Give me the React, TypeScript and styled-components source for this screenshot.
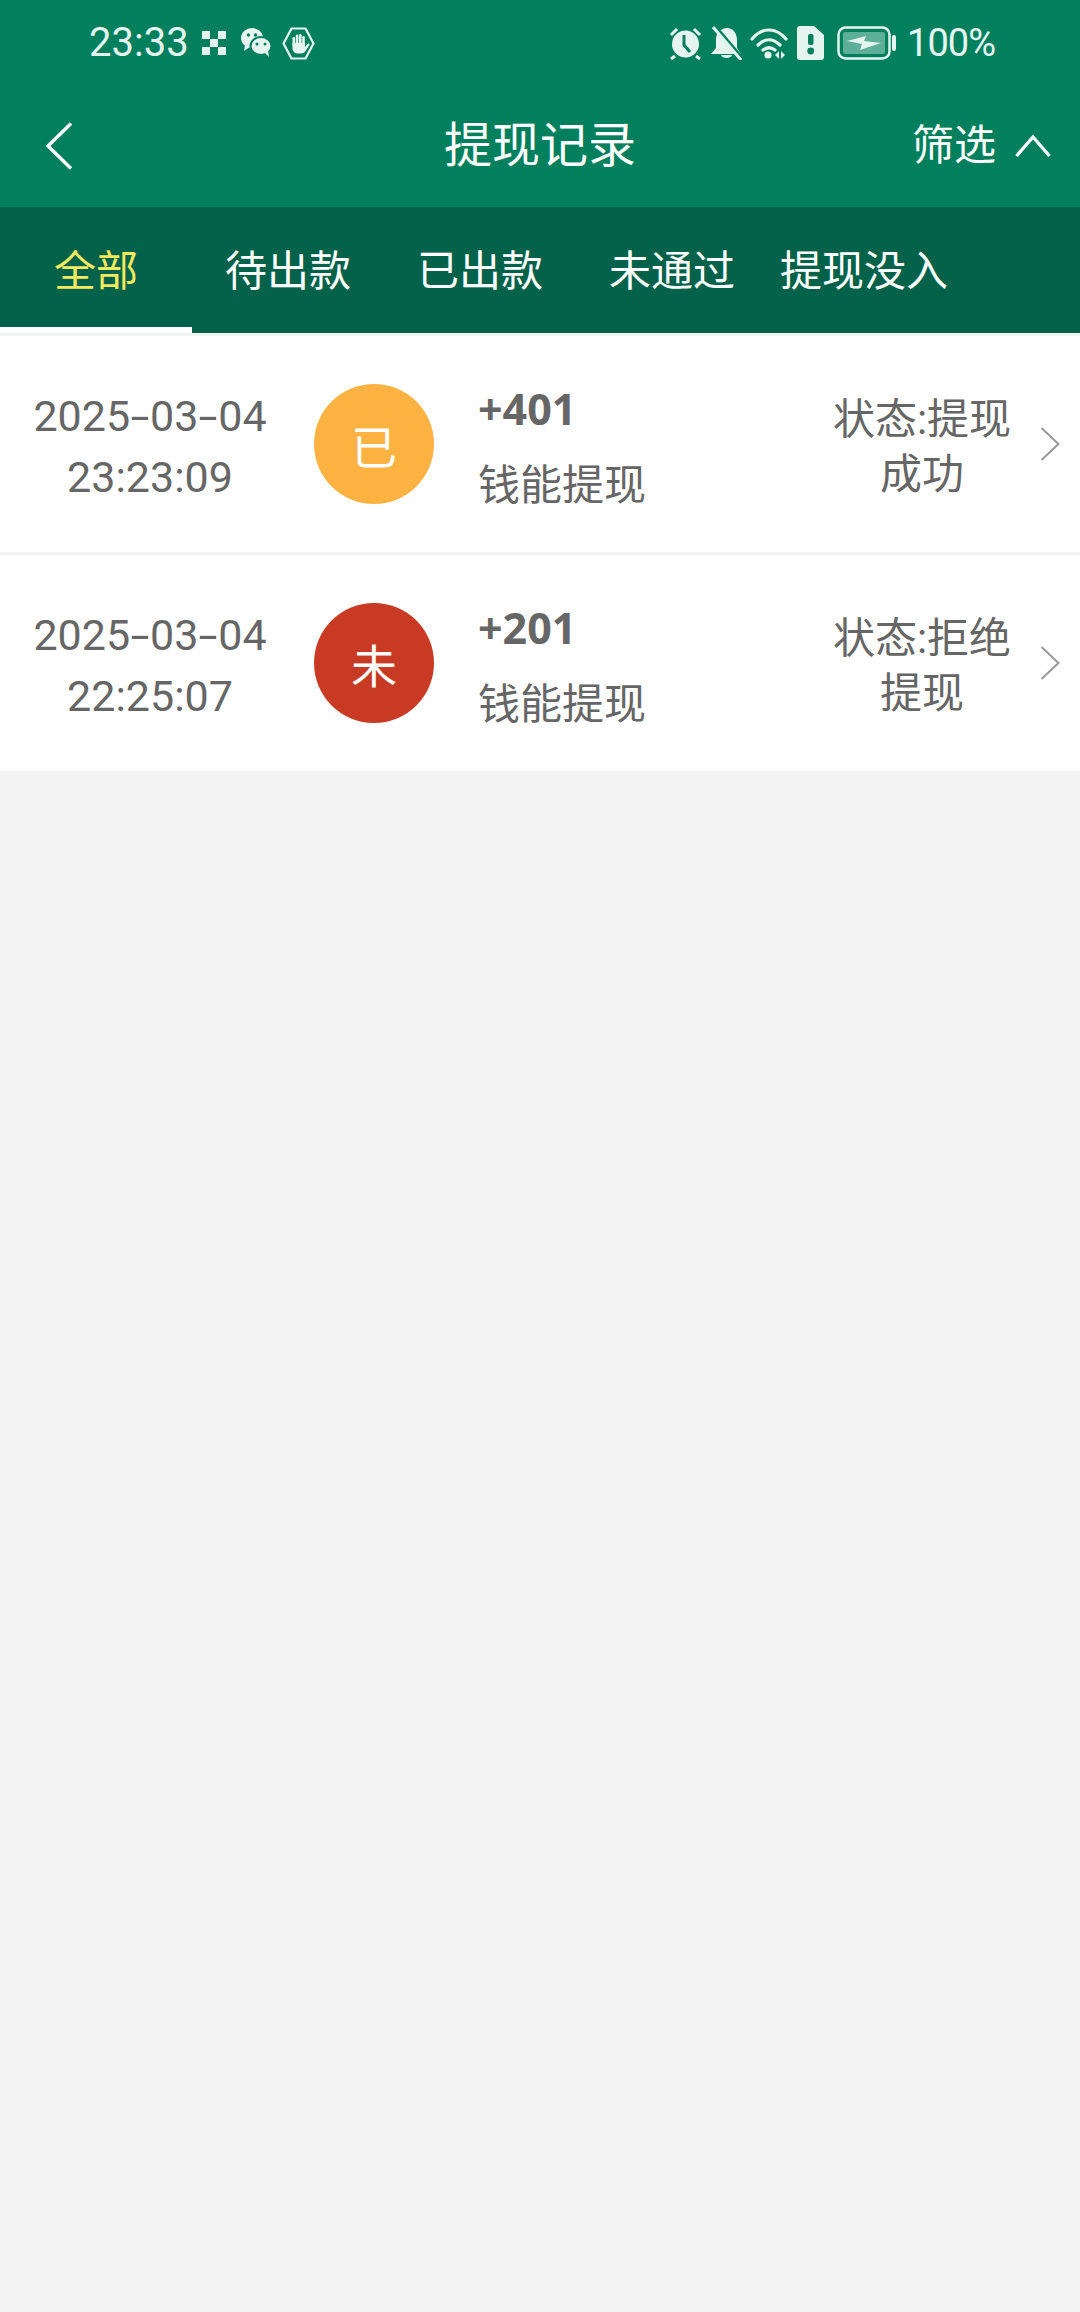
import React from 'react';
import styled, { createGlobalStyle } from 'styled-components';

const GlobalStyle = createGlobalStyle`
  html, body {
    margin: 0;
    padding: 0;
    background: #f3f3f3;
  }
  * {
    box-sizing: border-box;
  }
`;

const FONT = `Roboto, "Noto Sans CJK SC", sans-serif`;

const Page = styled.div`
  width: 1080px;
  height: 2312px;
  background: #f3f3f3;
  font-family: ${FONT};
  overflow: hidden;
`;

const Header = styled.header`
  background: #02805e;
  color: #fff;
`;

const StatusBar = styled.div`
  height: 84px;
  padding: 2px 85px 0 89px;
  display: flex;
  align-items: center;
  justify-content: space-between;
  color: #e6f4f0;
`;

const StatusGroup = styled.div<{ $gap: number }>`
  display: flex;
  align-items: center;
  gap: ${({ $gap }) => $gap}px;
`;

const Clock = styled.span`
  font-size: 40px;
  line-height: 80px;
  margin-right: 3px;
`;

const BatteryLevel = styled.span`
  font-size: 38px;
  letter-spacing: -1px;
  line-height: 80px;
  margin-left: 3px;
`;

const NavBar = styled.div`
  height: 123px;
  padding: 0 29px 0 45px;
  display: flex;
  align-items: center;
  justify-content: space-between;
  position: relative;
`;

const Title = styled.h1`
  position: absolute;
  left: 0;
  right: 0;
  top: 28px;
  margin: 0;
  text-align: center;
  font-size: 48px;
  line-height: 68px;
  font-weight: 400;
`;

const FilterButton = styled.div`
  display: flex;
  align-items: center;
  gap: 19px;
  font-size: 42px;
  line-height: 56px;
`;

const Tabs = styled.nav`
  height: 126px;
  background: #04624a;
  display: flex;
`;

const Tab = styled.div<{ $active?: boolean }>`
  width: 192px;
  flex: none;
  position: relative;
  display: flex;
  align-items: center;
  justify-content: center;
  padding-bottom: 6px;
  font-size: 42px;
  color: ${({ $active }) => ($active ? '#f3e95f' : '#ffffff')};

  ${({ $active }) =>
    $active &&
    `&::after {
      content: '';
      position: absolute;
      left: 0;
      bottom: 0;
      width: 100%;
      height: 6px;
      background: #fff;
    }`}
`;

const List = styled.ul`
  list-style: none;
  margin: 3px 0 0;
  padding: 0;
  display: flex;
  flex-direction: column;
  gap: 3px;
`;

const Row = styled.li`
  height: 216px;
  background: #fff;
  display: flex;
  align-items: center;
  color: #666;
`;

const DateColumn = styled.div`
  width: 300px;
  flex: none;
  text-align: center;
  font-size: 43px;
  line-height: 61px;
  margin-top: 6px;
`;

// the date's hyphens are drawn wider than the Roboto glyph
const Dash = styled.span`
  display: inline-block;
  margin: 0 4px;
  transform: scaleX(1.6);
`;

const Avatar = styled.div<{ $color: string }>`
  width: 120px;
  height: 120px;
  margin: 0 14px;
  flex: none;
  border-radius: 50%;
  background: ${({ $color }) => $color};
  color: #fff;
  display: flex;
  align-items: center;
  justify-content: center;
  font-size: 46px;
`;

const Info = styled.div`
  width: 354px;
  flex: none;
  margin: 4px 0 0 30px;
`;

const Amount = styled.div`
  font-family: "Noto Sans", ${FONT};
  font-weight: 700;
  font-size: 43px;
  line-height: 62px;
`;

const Label = styled.div`
  font-size: 42px;
  line-height: 56px;
  margin-top: 18px;
`;

const Status = styled.div`
  width: 180px;
  flex: none;
  text-align: center;
  font-size: 42px;
  line-height: 55px;
  margin-top: 6px;
`;

const RowChevron = styled.svg`
  width: 20px;
  height: 34px;
  margin-left: 28px;
  flex: none;
`;

const AlarmIcon = () => (
  <svg width="33" height="34" viewBox="0 0 33 34">
    <circle cx="16.500" cy="18" r="13.500" fill="currentColor" />
    <path d="M15 9v10l6 7" fill="none" stroke="#02805e" strokeWidth="3" />
    <path d="M2 9l6-6M31 9l-6-6M6 30l-4 3M27 30l4 3" stroke="currentColor" strokeWidth="3" fill="none" />
  </svg>
);

const BellOffIcon = () => (
  <svg width="32" height="34" viewBox="0 0 32 34">
    <path d="M6 13c0-6 5-11 11-11s10 5 10 12v8l4 6H1l5-6z" fill="currentColor" />
    <path d="M11 29h11c-1 4-10 4-11 0z" fill="currentColor" />
    <path d="M3 -1l28 33" stroke="#02805e" strokeWidth="5" />
    <path d="M3 1l28 33" stroke="currentColor" strokeWidth="3" />
  </svg>
);

const WifiIcon = () => (
  <svg width="39" height="34" viewBox="0 0 39 34">
    <path d="M2 13C12 1 26 1 36 13M8 19c7-7 15-7 22 0M13 24c4-3 8-3 12 0" fill="none" stroke="currentColor" strokeWidth="3.200" strokeLinecap="round" />
    <circle cx="18" cy="29" r="3.600" fill="currentColor" />
    <path d="M29 25v8l-4-4zM31 25v8l4-4z" fill="currentColor" />
  </svg>
);

const SimAlertIcon = () => (
  <svg width="27" height="34" viewBox="0 0 27 34">
    <path d="M3 0h14l10 9v22a3 3 0 0 1-3 3H3a3 3 0 0 1-3-3V3a3 3 0 0 1 3-3z" fill="currentColor" />
    <rect x="11" y="8" width="5.500" height="11" rx="2" fill="#02805e" />
    <circle cx="13.700" cy="25" r="3.400" fill="#02805e" />
  </svg>
);

const BatteryIcon = () => (
  <svg width="64" height="34" viewBox="-5 0 64 34">
    <rect x="1.500" y="1.500" width="51" height="31" rx="7" fill="none" stroke="currentColor" strokeWidth="2.500" />
    <rect x="6" y="6" width="42" height="22" rx="2" fill="currentColor" opacity="0.4" />
    <rect x="55" y="9" width="4" height="16" rx="2" fill="currentColor" />
    <path d="M10 15l19-5-2 5 17 2-21 7 2-6z" fill="currentColor" />
  </svg>
);

const MosaicIcon = () => (
  <svg width="24" height="24" viewBox="0 0 24 24" fill="currentColor">
    <path d="M0 0h8v8H0zM16 0h8v8h-8zM8 8h8v8H8zM0 16h8v8H0zM16 16h8v8h-8z" />
  </svg>
);

const WechatIcon = () => (
  <svg width="36" height="30" viewBox="-5 0 36 30" fill="currentColor">
    <ellipse cx="11" cy="10" rx="11" ry="10" />
    <path d="M4 17l-1 6 6-4z" />
    <ellipse cx="20" cy="18" rx="10.500" ry="9" stroke="#02805e" strokeWidth="2" />
    <path d="M24 25l4 4-1-6z" />
    <circle cx="7.500" cy="7" r="1.700" fill="#02805e" />
    <circle cx="14.500" cy="7" r="1.700" fill="#02805e" />
    <circle cx="16" cy="16" r="1.500" fill="#02805e" />
    <circle cx="24" cy="16" r="1.500" fill="#02805e" />
  </svg>
);

const HandIcon = () => (
  <svg width="33" height="33" viewBox="0 0 33 33">
    <path d="M9.500 1.500h14L31.500 16.500 23.500 31.500h-14L1.500 16.500z" fill="none" stroke="currentColor" strokeWidth="2.200" strokeLinejoin="round" />
    <g fill="currentColor">
      <rect x="10.500" y="10" width="2.600" height="10" rx="1.300" />
      <rect x="13.800" y="7.500" width="2.600" height="11" rx="1.300" />
      <rect x="17" y="7" width="2.600" height="11" rx="1.300" />
      <rect x="20.200" y="9" width="2.600" height="10" rx="1.300" />
      <path d="M10.500 16h12.300v4l2.700-3c1-1 2.500 0 1.800 1.300l-4 6c-1 1.500-2.500 2.200-4.300 2.200h-3c-3 0-5-1.500-5.500-4.500z" />
    </g>
  </svg>
);

// wraps each hyphen of a date so it can be stretched
const renderDate = (date: string) =>
  date.split('-').map((part, i) => (
    <React.Fragment key={part + i}>
      {i > 0 && <Dash>-</Dash>}
      {part}
    </React.Fragment>
  ));

const App: React.FC = () => {
  const tabs = ['全部', '待出款', '已出款', '未通过', '提现没入'];
  const records = [
    { date: '2025-03-04', time: '23:23:09', badge: '已', color: '#fdb242', amount: '+401', status: '状态:提现成功' },
    { date: '2025-03-04', time: '22:25:07', badge: '未', color: '#c93a25', amount: '+201', status: '状态:拒绝提现' },
  ];

  return (
    <Page>
      <GlobalStyle />
      <Header>
        <StatusBar>
          <StatusGroup $gap={10}>
            <Clock>23:33</Clock>
            <MosaicIcon />
            <WechatIcon />
            <HandIcon />
          </StatusGroup>
          <StatusGroup $gap={8}>
            <AlarmIcon />
            <BellOffIcon />
            <WifiIcon />
            <SimAlertIcon />
            <BatteryIcon />
            <BatteryLevel>100%</BatteryLevel>
          </StatusGroup>
        </StatusBar>
        <NavBar>
          <svg width="28" height="48" viewBox="0 0 28 48">
            <path d="M26 1.500L3 24l23 22.500" fill="none" stroke="#fff" strokeWidth="3.400" />
          </svg>
          <Title>提现记录</Title>
          <FilterButton>
            筛选
            <svg width="36" height="24" viewBox="0 0 36 24">
              <path d="M1.500 22L18 3l16.500 19" fill="none" stroke="#fff" strokeWidth="3.400" />
            </svg>
          </FilterButton>
        </NavBar>
      </Header>
      <Tabs>
        {tabs.map((tab, i) => (
          <Tab key={tab} $active={i === 0}>
            {tab}
          </Tab>
        ))}
      </Tabs>
      <List>
        {records.map((record) => (
          <Row key={record.time}>
            <DateColumn>
              {renderDate(record.date)}
              <br />
              {record.time}
            </DateColumn>
            <Avatar $color={record.color}>{record.badge}</Avatar>
            <Info>
              <Amount>{record.amount}</Amount>
              <Label>钱能提现</Label>
            </Info>
            <Status>{record.status}</Status>
            <RowChevron viewBox="0 0 20 34">
              <path d="M1.500 1l17 16-17 16" fill="none" stroke="#999" strokeWidth="2" />
            </RowChevron>
          </Row>
        ))}
      </List>
    </Page>
  );
};

export default App;
